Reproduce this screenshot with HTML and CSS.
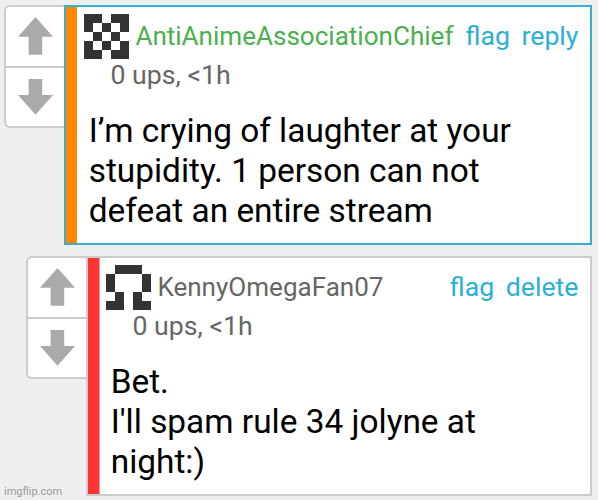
FILE: index.html
```html
<!DOCTYPE html>
<html lang="en">
<head>
    <meta charset="UTF-8">
    <meta name="viewport" content="width=device-width, initial-scale=1.0">
    <title>Comments</title>
    <link rel="stylesheet" href="styles.css">
</head>
<body>
    <div class="comments">
        <div class="comment highlighted">
            <div class="votes">
                <div class="vote">
                    <svg class="arrow" viewBox="0 0 35 38"><path d="M17.5 0L35 19.7H24.2V37.7H10.6V19.7H0Z"/></svg>
                </div>
                <div class="vote down">
                    <svg class="arrow" viewBox="0 0 35 38"><path d="M17.5 35.7L35 16H24.2V0H10.6V16H0Z"/></svg>
                </div>
            </div>
            <div class="card">
                <div class="head">
                    <svg class="icon" viewBox="0 0 5 5" shape-rendering="crispEdges"><path d="M0 0h2v1h-2zM3 0h2v1h-2zM0 1h1v1h-1zM2 1h1v1h-1zM4 1h1v1h-1zM1 2h1v1h-1zM3 2h1v1h-1zM0 3h1v1h-1zM2 3h1v1h-1zM4 3h1v1h-1zM0 4h2v1h-2zM3 4h2v1h-2z"/></svg>
                    <span class="user green">AntiAnimeAssociationChief</span>
                    <div class="actions"><a>flag</a><a>reply</a></div>
                </div>
                <div class="info">0 ups, &lt;1h</div>
                <div class="text">I’m crying of laughter at your<br>stupidity. 1 person can not<br>defeat an entire stream</div>
            </div>
        </div>
        <div class="comment nested">
            <div class="votes">
                <div class="vote">
                    <svg class="arrow" viewBox="0 0 35 38"><path d="M17.5 0L35 19.7H24.2V37.7H10.6V19.7H0Z"/></svg>
                </div>
                <div class="vote down">
                    <svg class="arrow" viewBox="0 0 35 38"><path d="M17.5 35.7L35 16H24.2V0H10.6V16H0Z"/></svg>
                </div>
            </div>
            <div class="card">
                <div class="head">
                    <svg class="icon" viewBox="0 0 5 5" shape-rendering="crispEdges"><path d="M1 0h3v1h-3zM0 1h1v2h-1zM4 1h1v2h-1zM1 3h1v1h-1zM3 3h1v1h-1zM0 4h2v1h-2zM3 4h2v1h-2z"/></svg>
                    <span class="user">KennyOmegaFan07</span>
                    <div class="actions"><a>flag</a><a>delete</a></div>
                </div>
                <div class="info">0 ups, &lt;1h</div>
                <div class="text">Bet.<br>I'll spam rule 34 jolyne at<br>night:)</div>
            </div>
        </div>
    </div>
    <div class="watermark">imgflip.com</div>
</body>
</html>
```

FILE: styles.css
```css
* {
    box-sizing: border-box;
}
body {
    margin: 0;
    background-color: #efefef;
    font-family: Roboto, sans-serif;
    overflow: hidden;
}
.comments {
    display: flex;
    flex-direction: column;
    gap: 11px;
    height: 500px;
    padding: 5px 6px 0 4px;
}
.comment {
    display: flex;
    align-items: flex-start;
    height: 240px;
}
.nested {
    margin-left: 22px;
}
/* up / down buttons */
.votes {
    width: 60px;
    height: 123px;
    background-color: #fff;
    border: 2px solid #ccc;
    border-right: none;
    border-radius: 6px 0 0 6px;
}
.vote {
    height: 59px;
    padding: 9.5px 0 0 11.5px;
}
.down {
    height: 62px;
    border-top: 2px solid #ccc;
    padding-top: 11px;
}
.arrow {
    display: block;
    width: 35px;
    height: 38px;
    fill: #aaa;
}
.card {
    flex: 1;
    height: 240px;
    padding: 7px 11.5px 0 18px;
    background-color: #fff;
    background-image: linear-gradient(#ff3535, #ff3535);
    background-size: 11.5px 100%;
    background-repeat: no-repeat;
    border: 2px solid #ccc;
}
.highlighted .card {
    border-color: #35b1cd;
    background-image: linear-gradient(#ff8800, #ff8800);
    background-size: 11px 100%;
}
.head {
    display: flex;
    height: 45px;
    font-size: 26.05px;
    line-height: 45px;
    white-space: nowrap;
}
.icon {
    width: 45px;
    height: 45px;
    fill: #333;
}
.user {
    margin-left: 6.4px;
    color: #666;
}
.green {
    color: #4caf50;
}
.actions {
    display: flex;
    gap: 11.5px;
    margin-left: auto;
    color: #2ab0d4;
    font-size: 26.7px;
}
.info {
    padding-left: 26.5px;
    color: #666;
    font-size: 26.7px;
    line-height: 33px;
}
.text {
    margin-top: 19px;
    padding-left: 4.7px;
    color: #000;
    font-size: 33.4px;
    line-height: 40.2px;
    white-space: nowrap;
}
.watermark {
    position: absolute;
    left: 4px;
    bottom: 1px;
    color: #999;
    font-size: 11px;
    line-height: 14px;
}
```
